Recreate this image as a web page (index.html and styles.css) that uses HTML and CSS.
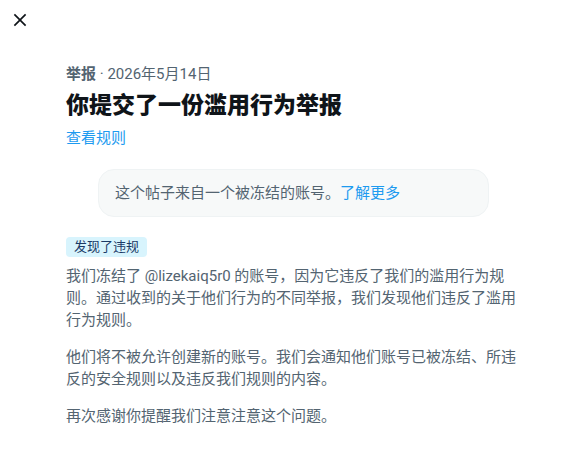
FILE: index.html
```html
<!DOCTYPE html>
<html lang="zh-CN">
<head>
<meta charset="utf-8">
<title>举报</title>
<link rel="stylesheet" href="styles.css">
</head>
<body>
<div class="page">
  <div class="topbar">
    <button class="close" aria-label="关闭">
      <svg viewBox="0 0 24 24" width="20" height="20"><path d="M10.59 12L4.54 5.96l1.42-1.42L12 10.59l6.04-6.05 1.42 1.42L13.41 12l6.05 6.04-1.42 1.42L12 13.41l-6.04 6.05-1.42-1.42L10.59 12z"/></svg>
    </button>
  </div>
  <main class="content">
    <div class="meta"><span class="meta-strong">举报</span> · 2026年5月14日</div>
    <h1 class="title">你提交了一份滥用行为举报</h1>
    <a class="link rules" href="#">查看规则</a>
    <div class="notice">这个帖子来自一个被冻结的账号。<a class="link" href="#">了解更多</a></div>
    <div class="badge-row"><span class="badge">发现了违规</span></div>
    <div class="body">
      <p>我们冻结了 @lizekaiq5r0 的账号，因为它违反了我们的滥用行为规则。通过收到的关于他们行为的不同举报，我们发现他们违反了滥用行为规则。</p>
      <p>他们将不被允许创建新的账号。我们会通知他们账号已被冻结、所违反的安全规则以及违反我们规则的内容。</p>
      <p>再次感谢你提醒我们注意注意这个问题。</p>
    </div>
  </main>
</div>
</body>
</html>
```

FILE: styles.css
```css
* { box-sizing: border-box; }
html, body { margin: 0; padding: 0; background: #ffffff; }
body {
  font-family: Roboto, "Noto Sans CJK SC", sans-serif;
  color: #0f1419;
  font-size: 15px;
}
.page { width: 587px; }
.topbar {
  height: 40px;
  display: flex;
  align-items: center;
  padding-left: 10px;
}
.close {
  width: 20px;
  height: 20px;
  padding: 0;
  border: 0;
  background: none;
  display: flex;
  cursor: pointer;
}
.close svg { fill: #0f1419; }
.content {
  padding: 24px 66px 0 66px;
  display: flex;
  flex-direction: column;
}
.meta {
  font-size: 15px;
  line-height: 20px;
  color: #536471;
}
.meta-strong { font-weight: 700; }
.title {
  margin: 8px 0 0 0;
  font-size: 23px;
  line-height: 28px;
  font-weight: 800;
  color: #0f1419;
}
.link {
  color: #1d9bf0;
  text-decoration: none;
}
.rules {
  margin-top: 8px;
  font-size: 15px;
  line-height: 20px;
  align-self: flex-start;
}
.notice {
  margin: 21px 32px 0 32px;
  padding: 13px 16px;
  background: #f7f9f9;
  border: 1px solid #eff3f4;
  border-radius: 16px;
  font-size: 15px;
  line-height: 20px;
  color: #536471;
}
.badge-row {
  margin-top: 20px;
  display: flex;
}
.badge {
  background: #d8f4fd;
  color: #1a3a66;
  font-size: 13px;
  line-height: 16px;
  padding: 2px 8px;
  border-radius: 4px;
}
.body {
  margin-top: 8px;
  font-size: 15px;
  line-height: 22px;
  color: #536471;
}
.body p { margin: 0 0 15px 0; }
```
